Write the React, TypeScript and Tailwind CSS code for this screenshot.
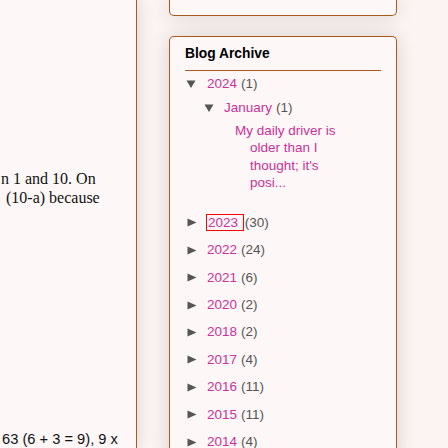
import React from "react";

const pink = "text-[#c9329a]";

function Down() {
  return (
    <svg width="10" height="8" viewBox="0 0 10 8" className="shrink-0">
      <polygon points="0.5,0.5 9.5,0.5 5,8" fill="#555555" />
    </svg>
  );
}

function Right() {
  return (
    <svg width="10" height="9" viewBox="0 0 10 9" className="shrink-0">
      <polygon points="0.5,0.5 9.5,4.5 0.5,8.5" fill="#555555" />
    </svg>
  );
}

const years: [string, string][] = [
  ["2022", "24"],
  ["2021", "6"],
  ["2020", "2"],
  ["2018", "2"],
  ["2017", "4"],
  ["2016", "11"],
  ["2015", "11"],
  ["2014", "4"],
];

export default function App() {
  return (
    <div className="w-[448px] h-[448px] overflow-hidden flex bg-[#fbf4f3]">
      <div
        className="w-[137px] shrink-0 h-[448px] border-r border-[#a95a1f] bg-[#fdf7f7] relative z-10 shadow-[0_0_16px_rgba(0,0,0,0.14)] flex flex-col text-[#111] text-[16px] leading-[19px] overflow-hidden"
        style={{ fontFamily: '"Liberation Serif", serif' }}
      >
        <div className="mt-[169px] pl-[1px] whitespace-nowrap">n 1 and 10. On</div>
        <div className="pl-[6px] whitespace-nowrap">(10-a) because</div>
        <div
          className="mt-[223px] pl-[2px] text-[14.7px] whitespace-nowrap"
          style={{ fontFamily: '"Liberation Sans", sans-serif' }}
        >
          63 (6 + 3 = 9), 9 x
        </div>
      </div>
      <div
        className="flex-1 flex flex-col pl-[32px]"
        style={{ fontFamily: '"Liberation Sans", Arial, sans-serif' }}
      >
        <div className="w-[228px] h-[16px] shrink-0 border border-t-0 border-[#a95a1f] rounded-b-[5px] bg-[#fdf7f7] shadow-[0_0_20px_rgba(0,0,0,0.14)]" />
        <div className="mt-[20px] w-[228px] h-[430px] shrink-0 border border-b-0 border-[#a95a1f] rounded-t-[5px] bg-[#fdf7f7] shadow-[0_0_20px_rgba(0,0,0,0.14)] px-[15px] overflow-hidden">
          <div className="pt-[9px] pb-[8px] text-[13.8px] leading-[16px] font-bold text-black border-b border-[#a95a1f]">
            Blog Archive
          </div>
          <div className="text-[13.5px] leading-[18px]">
            <div className="mt-[4px] h-[18px] flex items-center pl-[1px]">
              <Down />
              <span className={`ml-[11px] ${pink}`}>2024</span>
              <span className="ml-[4px] text-[#555]">(1)</span>
            </div>
            <div className="mt-[6px] h-[18px] flex items-center pl-[19px]">
              <Down />
              <span className={`ml-[10px] ${pink}`}>January</span>
              <span className="ml-[4px] text-[#555]">(1)</span>
            </div>
            <div
              className={`mt-[5px] ml-[50px] w-[122px] pl-[15px] -indent-[15px] leading-[17.3px] ${pink}`}
            >
              My daily driver is older than I thought; it's posi...
            </div>
            <div className="mt-[18px] flex flex-col">
              <div className="h-[27.4px] flex items-center pl-[2px]">
                <Right />
                <span className={`ml-[9px] ${pink} border border-[#ff0000] px-[1px] leading-[15px] h-[17px] flex items-center`}>
                  2023&nbsp;
                </span>
                <span className="ml-[1px] text-[#555]">(30)</span>
              </div>
              {years.map(([y, c]) => (
                <div key={y} className="h-[27.4px] flex items-center pl-[2px]">
                  <Right />
                  <span className={`ml-[10px] ${pink}`}>{y}</span>
                  <span className="ml-[4px] text-[#555]">({c})</span>
                </div>
              ))}
            </div>
          </div>
        </div>
      </div>
    </div>
  );
}
